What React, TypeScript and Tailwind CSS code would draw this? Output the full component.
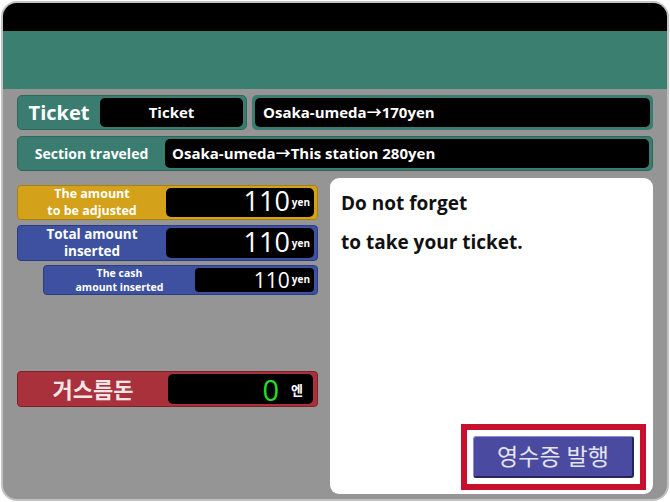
import React from "react";

const font = { fontFamily: '"Open Sans", "Noto Sans", "Noto Sans CJK KR", sans-serif' };

export default function App() {
  return (
    <div className="w-[670px] h-[502px] bg-white p-[1px]" style={font}>
      <div className="h-full rounded-[16px] border-2 border-[#c2c2c2] bg-[#959595] overflow-hidden flex flex-col">
        <div className="h-[28px] bg-black shrink-0" />
        <div className="h-[58px] bg-[#3b7f71] shrink-0" />
        <div className="flex-1 flex flex-col px-[14px] pt-[6px] pb-[5px]">
          {/* Row 1 */}
          <div className="flex gap-[5px] h-[35px]">
            <div className="w-[230px] flex items-center rounded-[5px] bg-[#3a7d70] border border-[#2e6659] pr-[3px]">
              <div className="w-[82px] text-center text-white font-bold text-[20px] leading-none">Ticket</div>
              <div className="flex-1 h-[29px] rounded-[5px] bg-black flex items-center justify-center text-white font-bold text-[15px]">
                Ticket
              </div>
            </div>
            <div className="flex-1 rounded-[5px] bg-[#3a7d70] p-[3px]">
              <div className="h-full rounded-[5px] bg-black flex items-center pl-[8px] text-white font-bold text-[15px]">
                Osaka-umeda→170yen
              </div>
            </div>
          </div>
          {/* Row 2 */}
          <div className="flex items-center mt-[6px] h-[35px] rounded-[5px] bg-[#3a7d70] border border-[#2e6659] pr-[3px]">
            <div className="w-[147px] text-center text-white font-bold text-[14px]">Section traveled</div>
            <div className="flex-1 h-[29px] rounded-[5px] bg-black flex items-center pl-[7px] text-white font-bold text-[15px]">
              Osaka-umeda→This station 280yen
            </div>
          </div>
          {/* Bottom */}
          <div className="flex-1 flex gap-[12px] mt-[7px]">
            <div className="w-[301px] flex flex-col pt-[7px]">
              <div className="h-[35px] flex items-center rounded-[4px] bg-[#d3a21a] border border-[#a88010] pr-[3px]">
                <div className="w-[148px] flex flex-col items-center text-white font-bold text-[12.5px] leading-[16.5px]">
                  <span>The amount</span>
                  <span>to be adjusted</span>
                </div>
                <div className="flex-1 h-[29px] rounded-[5px] bg-black flex items-end justify-end pr-[4px] pb-[1px] text-white">
                  <span className="text-[27px] leading-[30px]">110</span>
                  <span className="text-[10px] font-bold ml-[2px] mb-[6px]">yen</span>
                </div>
              </div>
              <div className="h-[36px] mt-[5px] flex items-center rounded-[4px] bg-[#3d51a0] border border-[#2c3c80] pr-[3px]">
                <div className="w-[148px] flex flex-col items-center text-white font-bold text-[13.5px] leading-[17px]">
                  <span>Total amount</span>
                  <span>inserted</span>
                </div>
                <div className="flex-1 h-[30px] rounded-[5px] bg-black flex items-end justify-end pr-[4px] pb-[1px] text-white">
                  <span className="text-[27px] leading-[30px]">110</span>
                  <span className="text-[10px] font-bold ml-[2px] mb-[6px]">yen</span>
                </div>
              </div>
              <div className="h-[30px] mt-[4px] ml-[26px] flex items-center rounded-[4px] bg-[#3d51a0] border border-[#2c3c80] pr-[3px]">
                <div className="w-[151px] flex flex-col items-center text-white font-bold text-[10.5px] leading-[14px]">
                  <span>The cash</span>
                  <span>amount inserted</span>
                </div>
                <div className="flex-1 h-[24px] rounded-[4px] bg-black flex items-end justify-end pr-[4px] text-white">
                  <span className="text-[21px] leading-[24px]">110</span>
                  <span className="text-[10px] font-bold ml-[2px] mb-[5px]">yen</span>
                </div>
              </div>
              <div className="h-[36px] mt-[76px] flex items-center rounded-[4px] bg-[#a9313c] border border-[#7d2029] pr-[4px]">
                <div className="w-[150px] text-center text-[#f4e6e6] font-bold text-[22px] leading-none">거스름돈</div>
                <div className="flex-1 h-[30px] rounded-[5px] bg-black flex items-center justify-end pr-[10px]">
                  <span className="text-[#22e022] text-[29px] leading-none">0</span>
                  <span className="text-white font-bold text-[13px] ml-[12px] mt-[4px]">엔</span>
                </div>
              </div>
            </div>
            <div className="flex-1 rounded-[9px] bg-white flex flex-col pl-[11px] pr-[6px] pt-[12px] pb-[4px]">
              <div className="text-[#111] font-bold text-[19px] leading-[26px]">Do not forget</div>
              <div className="text-[#111] font-bold text-[19px] leading-[26px] mt-[13px]">to take your ticket.</div>
              <div className="flex-1" />
              <div className="flex justify-end">
                <div className="border-[6px] border-[#c8102e] p-[6px] mr-[1px]">
                  <div className="w-[161px] h-[42px] rounded-[3px] bg-[#4a4ba0] border-t border-l border-[#8c8ed0] border-b-2 border-r-2 border-b-[#24255a] border-r-[#24255a] flex items-center justify-center text-[#e4e4ee] text-[23px] leading-none">
                    영수증 발행
                  </div>
                </div>
              </div>
            </div>
          </div>
        </div>
      </div>
    </div>
  );
}
